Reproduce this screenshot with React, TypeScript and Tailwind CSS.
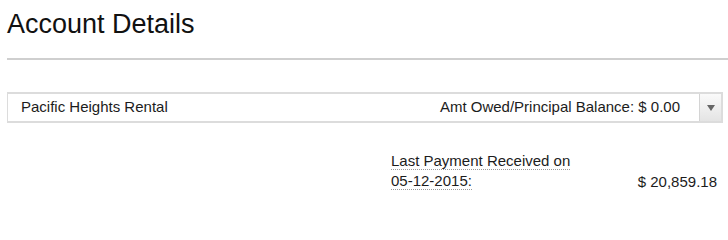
import React from "react";

export default function App() {
  return (
    <div
      className="w-[728px] h-[204px] bg-white overflow-hidden text-[#1c1c1c]"
      style={{ fontFamily: '"Liberation Sans", Arial, sans-serif' }}
    >
      <div className="pl-[7px]">
        <h1 className="pt-[8px] text-[27px] leading-[32px] text-[#111] font-normal">
          Account Details
        </h1>
        <div className="mt-[18px] h-[2px] bg-[#cfcfcf]" />
        <div className="mt-[32px] mr-[5px] h-[31px] flex border-2 border-[#dcdcdc] border-l-[1.5px]">
          <div className="flex-1 flex items-center justify-between pl-[13px] pr-[19px] text-[15px]">
            <span>Pacific Heights Rental</span>
            <span>Amt Owed/Principal Balance: $ 0.00</span>
          </div>
          <div className="w-[22px] flex items-center justify-center border-l border-[#d4d4d4] bg-gradient-to-b from-[#fafafa] to-[#e4e4e4]">
            <svg width="8" height="6" viewBox="0 0 8 6">
              <path d="M0 0 H8 L4 6 Z" fill="#666" />
            </svg>
          </div>
        </div>
        <div className="mt-[28px] ml-[384px] mr-[11px] flex items-end justify-between text-[15px] leading-[20px]">
          <div className="w-[200px]">
            <span className="border-b border-dotted border-[#9a9a9a]">
              Last Payment Received on 05-12-2015:
            </span>
          </div>
          <div className="pb-[1px] translate-y-[2px]">$ 20,859.18</div>
        </div>
      </div>
    </div>
  );
}
